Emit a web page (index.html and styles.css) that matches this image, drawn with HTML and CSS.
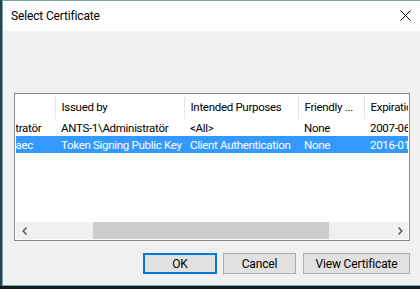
FILE: index.html
```html
<!DOCTYPE html>
<html>
  <head>
    <meta charset="UTF-8" />
    <meta name="viewport" content="width=device-width, initial-scale=1.0" />
    <title>Select Certificate</title>
    <link rel="stylesheet" href="styles.css">
  </head>
  <body>
    <div class="window">
      <div class="titlebar">
        <span class="title">Select Certificate</span>
        <svg class="close" width="11" height="11" viewBox="0 0 11 11">
          <path d="M0.5 0.5 L10.5 10.5 M10.5 0.5 L0.5 10.5" stroke="#000" stroke-width="1" fill="none" />
        </svg>
      </div>
      <div class="content">
        <div class="listview">
          <!-- list is scrolled to the right, first column mostly hidden -->
          <div class="viewport">
            <table class="cert-table">
              <colgroup>
                <col class="c-to" />
                <col class="c-by" />
                <col class="c-purpose" />
                <col class="c-name" />
                <col class="c-date" />
              </colgroup>
              <thead>
                <tr>
                  <th>Issued to</th>
                  <th>Issued by</th>
                  <th>Intended Purposes</th>
                  <th>Friendly ...</th>
                  <th>Expiration Date</th>
                </tr>
              </thead>
              <tbody>
                <tr>
                  <td>ANTS-1\Administratör</td>
                  <td>ANTS-1\Administratör</td>
                  <td>&lt;All&gt;</td>
                  <td>None</td>
                  <td>2007-06-14</td>
                </tr>
                <tr class="selected">
                  <td>9b1e4c2e 7d038aec</td>
                  <td>Token Signing Public Key</td>
                  <td>Client Authentication</td>
                  <td>None</td>
                  <td>2016-01-21</td>
                </tr>
              </tbody>
            </table>
          </div>
          <div class="hscroll">
            <span class="arrow">
              <svg width="6" height="8" viewBox="0 0 6 8"><path d="M4.5 0.5 L1.2 4 L4.5 7.5" stroke="#606060" stroke-width="1.6" fill="none" /></svg>
            </span>
            <div class="track"><div class="thumb"></div></div>
            <span class="arrow">
              <svg width="6" height="8" viewBox="0 0 6 8"><path d="M1.5 0.5 L4.8 4 L1.5 7.5" stroke="#606060" stroke-width="1.6" fill="none" /></svg>
            </span>
          </div>
        </div>
        <div class="buttons">
          <button class="btn btn-ok">OK</button>
          <button class="btn btn-cancel">Cancel</button>
          <button class="btn btn-view">View Certificate</button>
        </div>
      </div>
    </div>
    <div class="desktop"></div>
  </body>
</html>
```

FILE: styles.css
```css
*,
*::after,
*::before {
  box-sizing: border-box;
}
html,
body {
  margin: 0;
  height: 100%;
  overflow: hidden;
}
body {
  font-family: Roboto, 'Noto Sans', sans-serif;
  font-size: 11.5px;
  letter-spacing: -0.15px;
  color: #000;
  background-color: #2b4050;
  padding-left: 2px;
}
.window {
  width: 420px;
  border: 1px solid #74a9a5;
  background-color: #f0f0f0;
}
.titlebar {
  display: flex;
  align-items: center;
  justify-content: space-between;
  height: 30px;
  padding: 0 0 0 8px;
  background-color: #fff;
}
.title {
  font-size: 12px;
}
.close {
  margin-right: 10px;
  margin-top: -1px;
}
.content {
  height: 254px;
  padding: 62px 0 0 11px;
}
/* list box */
.listview {
  width: 396px;
  height: 148px;
  padding: 1px;
  display: flex;
  flex-direction: column;
  border: 1px solid #828790;
  background-color: #fff;
}
.viewport {
  flex: 1;
  overflow: hidden;
}
.cert-table {
  table-layout: fixed;
  border-collapse: collapse;
  width: 536px;
  margin-left: -88px;
  letter-spacing: -0.3px;
}
.c-to { width: 127px; }
.c-by { width: 129px; }
.c-purpose { width: 114px; }
.c-name { width: 66px; }
.c-date { width: 100px; }
.cert-table th,
.cert-table td {
  padding: 0 0 0 6px;
  text-align: left;
  white-space: nowrap;
  overflow: hidden;
}
.cert-table th {
  height: 24px;
  font-weight: normal;
  border-right: 1px solid #e5e5e5;
}
.cert-table td {
  height: 17px;
}
.cert-table tr.selected td {
  color: #fff;
  background-color: #3399ff;
}
/* horizontal scroll bar */
.hscroll {
  display: flex;
  height: 17px;
  background-color: #f0f0f0;
}
.arrow {
  display: flex;
  align-items: center;
  justify-content: center;
  width: 17px;
}
.track {
  flex: 1;
  padding-left: 60px;
  padding-right: 62px;
}
.thumb {
  height: 100%;
  background-color: #cdcdcd;
}
/* dialog buttons */
.buttons {
  display: flex;
  justify-content: flex-end;
  gap: 6px;
  width: 396px;
  margin-top: 12px;
}
.btn {
  height: 21px;
  padding: 0;
  font-family: inherit;
  font-size: 12px;
  letter-spacing: inherit;
  color: #000;
  background-color: #e1e1e1;
  border: 1px solid #adadad;
}
.btn-ok {
  width: 74px;
  border: 2px solid #0078d7;
}
.btn-cancel {
  width: 73px;
}
.btn-view {
  width: 107px;
  margin-left: 1px;
}
.desktop {
  height: 10px;
  margin-left: -2px;
  background-color: #15191c;
}
```
